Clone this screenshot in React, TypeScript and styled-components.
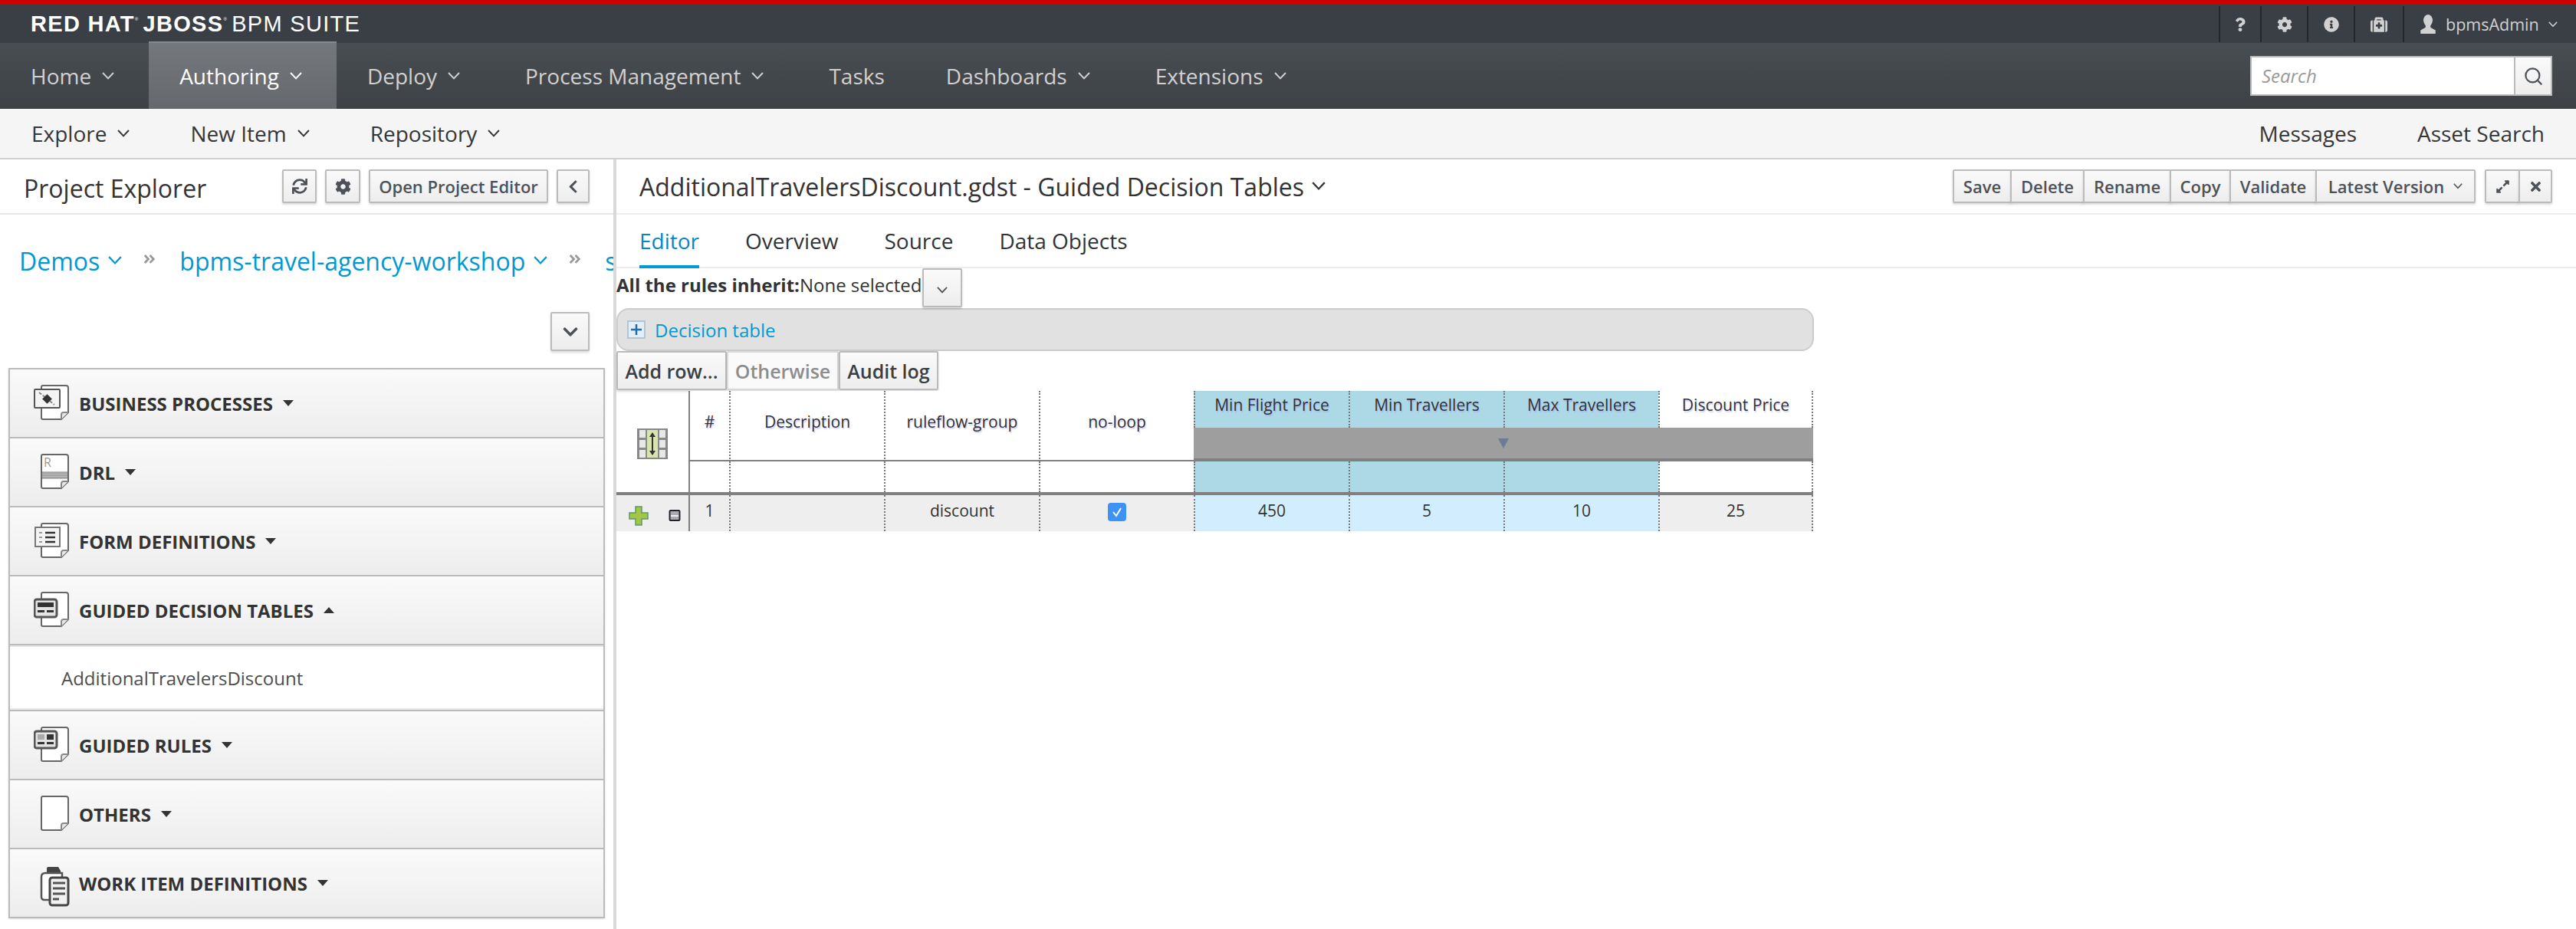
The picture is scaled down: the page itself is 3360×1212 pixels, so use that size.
import React from 'react'
import styled, { createGlobalStyle } from 'styled-components'
import {
  FaAngleDoubleRight,
  FaChevronDown,
  FaChevronLeft,
  FaCog,
  FaExpandAlt,
  FaInfoCircle,
  FaMedkit,
  FaQuestion,
  FaSync,
  FaTimes,
} from 'react-icons/fa'
import { FiSearch } from 'react-icons/fi'

const GlobalStyle = createGlobalStyle`
  html, body {
    margin: 0;
    padding: 0;
    background: #fff;
    overflow: hidden;
  }

  * {
    box-sizing: border-box;
  }

  body {
    font-family: "Open Sans", "Noto Sans", sans-serif;
    color: #333;
  }
`

const Page = styled.div`
  width: 3360px;
  height: 1212px;
  display: flex;
  flex-direction: column;
  overflow: hidden;
`

const TopBar = styled.header`
  height: 56px;
  flex: none;
  display: flex;
  justify-content: space-between;
  border-top: 6px solid #cc0000;
  background: #3a3f46;
  color: #fff;
`

const Logo = styled.div`
  padding: 9px 0 0 40px;
  font-family: "Liberation Sans", Arial, sans-serif;
  font-size: 29px;
  line-height: 32px;
  font-weight: 700;
  letter-spacing: 1.3px;
  white-space: nowrap;

  span {
    font-weight: 400;
  }

  sup {
    font-size: 6px;
    line-height: 0;
    vertical-align: 14px;
    font-weight: 400;
    margin-right: 5px;
  }
`

const Utilities = styled.div`
  display: flex;
  padding-top: 2px;
`

const UtilityItem = styled.div<{ $width: number }>`
  width: ${(p) => p.$width}px;
  height: 47px;
  display: flex;
  align-items: center;
  justify-content: center;
  border-left: 2px solid #23262b;
  color: #d1d1d1;
  font-size: 21.5px;
`

const UserItem = styled(UtilityItem)`
  justify-content: flex-start;
  gap: 12px;
  padding-left: 20px;
`

const MainNav = styled.nav`
  height: 86px;
  flex: none;
  display: flex;
  align-items: stretch;
  justify-content: space-between;
  padding-right: 31px;
  background: linear-gradient(#484d51, #3e4246);
`

const NavList = styled.div`
  display: flex;
`

const NavItem = styled.div<{ $active?: boolean }>`
  display: flex;
  align-items: center;
  gap: 14px;
  padding: 0 45px 0 40px;
  font-size: 28px;
  color: ${(p) => (p.$active ? '#fff' : '#d1d1d1')};
  white-space: nowrap;
  ${(p) =>
    p.$active &&
    `
    margin-top: -2px;
    border-top: 2px solid #85888c;
    background: linear-gradient(#74777b, #65686c);
  `}
`

const PlainNavItem = styled(NavItem)`
  padding-right: 40px;
`

const SearchBox = styled.div`
  align-self: center;
  width: 394px;
  height: 52px;
  display: flex;
  border: 2px solid #bbb;
  background: #fff;
`

const SearchText = styled.div`
  flex: 1;
  padding-left: 13px;
  font-size: 24px;
  line-height: 48px;
  font-style: italic;
  color: #999;
`

const SearchButton = styled.div`
  width: 48px;
  display: flex;
  align-items: center;
  justify-content: center;
  border-left: 2px solid #bbb;
  background: linear-gradient(#fafafa, #ededed);
  color: #4d5258;
  font-size: 27px;
`

const SubNav = styled.nav`
  height: 66px;
  flex: none;
  display: flex;
  justify-content: space-between;
  align-items: center;
  padding: 0 41px;
  border-bottom: 2px solid #cfcfcf;
  background: #f5f5f5;
  color: #363636;
  font-size: 28px;
`

const SubNavGroup = styled.div`
  display: flex;
  gap: 79px;
`

const SubNavItem = styled.div`
  display: flex;
  align-items: center;
  gap: 14px;
  white-space: nowrap;
`

const Workspace = styled.div`
  flex: 1;
  display: flex;
  min-height: 0;
`

const ExplorerPanel = styled.aside`
  width: 804px;
  flex: none;
  border-right: 4px solid #d8d8d8;
  overflow: hidden;
`

const ExplorerHeader = styled.div`
  height: 72px;
  display: flex;
  align-items: center;
  justify-content: space-between;
  padding: 0 31px;
  border-bottom: 2px solid #e5e5e5;
`

const PanelTitle = styled.div`
  padding-top: 4px;
  font-size: 32px;
  color: #333;
  white-space: nowrap;
`

const ButtonRow = styled.div<{ $gap?: number }>`
  display: flex;
  gap: ${(p) => p.$gap ?? 0}px;
`

const ToolButton = styled.div<{ $width?: number }>`
  height: 44px;
  ${(p) => p.$width && `width: ${p.$width}px;`}
  display: flex;
  align-items: center;
  justify-content: center;
  gap: 12px;
  border: 2px solid #bbb;
  border-radius: 2px;
  background: linear-gradient(#fafafa, #ededed);
  box-shadow: 0 2px 3px rgba(3, 3, 3, 0.15);
  color: #4d5258;
  font-size: 22px;
  font-weight: 600;
  white-space: nowrap;
`

const GroupButton = styled(ToolButton)`
  & + & {
    margin-left: -2px;
  }
`

const Breadcrumbs = styled.div`
  height: 120px;
  display: flex;
  align-items: center;
  padding-left: 25px;
  color: #0099d3;
  font-size: 32px;
  white-space: nowrap;
`

const Crumb = styled.div`
  display: flex;
  align-items: center;
  gap: 11px;
`

const CrumbSeparator = styled.div`
  display: flex;
  margin: 0 30px 4px 27px;
  color: #999;
  font-size: 18px;
`

const ExpandRow = styled.div`
  display: flex;
  justify-content: flex-end;
  padding: 7px 31px 0 0;
`

const ExpandButton = styled(ToolButton)`
  width: 51px;
  height: 51px;
  color: #4d5258;
`

const Accordion = styled.div`
  margin: 22px 11px 0;
  border: 2px solid #bbb;
  box-shadow: 0 1px 2px rgba(3, 3, 3, 0.15);
`

const AccordionHeader = styled.div`
  height: 90px;
  display: flex;
  align-items: center;
  padding-left: 31px;
  border-bottom: 2px solid #bbb;
  background: linear-gradient(#fafafa, #ededed);

  &:last-child {
    height: 88px;
    border-bottom: 0;
  }
`

const AccordionLabel = styled.div`
  margin-left: 13px;
  font-size: 24px;
  font-weight: 700;
  color: #333;
  white-space: nowrap;
`

const Caret = styled.div<{ $up?: boolean }>`
  margin-left: 13px;
  width: 0;
  height: 0;
  border-left: 7px solid transparent;
  border-right: 7px solid transparent;
  ${(p) => (p.$up ? 'border-bottom' : 'border-top')}: 8px solid #333;
`

const AccordionBody = styled.div`
  height: 86px;
  display: flex;
  align-items: center;
  padding: 0 0 2px 67px;
  border-top: 2px solid #e5e5e5;
  border-bottom: 2px solid #bbb;
  box-shadow: inset 0 -2px 0 #e8e8e8;
  font-size: 24px;
  color: #4d4d4d;
`

const EditorPanel = styled.main`
  flex: 1;
  min-width: 0;
`

const EditorHeader = styled.div`
  height: 72px;
  display: flex;
  align-items: center;
  justify-content: space-between;
  padding: 0 31px 0 30px;
  border-bottom: 2px solid #ededed;
`

const EditorTitle = styled(PanelTitle)`
  display: flex;
  align-items: center;
  gap: 10px;
  padding-top: 0;
`

const Tabs = styled.div`
  height: 70px;
  display: flex;
  gap: 60px;
  padding-left: 30px;
  border-bottom: 2px solid #ededed;
`

const Tab = styled.div<{ $active?: boolean }>`
  height: 70px;
  padding-top: 15px;
  font-size: 28px;
  color: ${(p) => (p.$active ? '#0088ce' : '#333')};
  border-bottom: 4px solid ${(p) => (p.$active ? '#0099d3' : 'transparent')};
  white-space: nowrap;
`

const InheritRow = styled.div`
  height: 52px;
  display: flex;
  align-items: flex-start;
  font-size: 24px;
  line-height: 43px;
  color: #333;

  b {
    font-weight: 700;
  }
`

const InheritButton = styled(ToolButton)`
  width: 52px;
  height: 51px;
  padding-top: 6px;
`

const TablePanel = styled.div`
  height: 56px;
  width: 1562px;
  display: flex;
  align-items: center;
  gap: 12px;
  padding: 0 0 0 12px;
  border: 2px solid #ccc;
  border-radius: 16px;
  background: #e1e1e1;
  color: #0099d3;
  font-size: 24px;
`

const TableActions = styled.div`
  height: 52px;
  display: flex;
`

const ActionButton = styled.div<{ $disabled?: boolean; $width: number }>`
  width: ${(p) => p.$width}px;
  height: 51px;
  display: flex;
  align-items: center;
  justify-content: center;
  border: 2px solid ${(p) => (p.$disabled ? '#d8d8d8' : '#bbb')};
  border-radius: 2px;
  background: ${(p) => (p.$disabled ? '#fafafa' : 'linear-gradient(#fafafa, #ededed)')};
  box-shadow: 0 2px 3px rgba(3, 3, 3, 0.15);
  color: ${(p) => (p.$disabled ? '#8b8d8f' : '#393f44')};
  font-size: 25px;
  font-weight: 600;
  white-space: nowrap;
`

const Grid = styled.div`
  display: grid;
  grid-template-columns: 96px 51px repeat(7, 202px);
  grid-template-rows: 48px 44px 40px 4px 47px;
  font-size: 21px;
  color: #333;
`

const Corner = styled.div`
  grid-column: 1;
  grid-row: 1 / 4;
  display: flex;
  align-items: center;
  justify-content: center;
  padding: 6px 0 0 0;
  border-right: 2px solid #808080;
`

const HeadCell = styled.div<{ $blue?: boolean; $tall?: boolean; $first?: boolean; $last?: boolean }>`
  ${(p) => (p.$tall ? 'grid-row: 1 / 3; border-bottom: 2px solid #808080; padding-top: 25px;' : 'padding-top: 3px;')}
  text-align: center;
  line-height: 30px;
  white-space: nowrap;
  background: ${(p) => (p.$blue ? '#add8e6' : '#fff')};
  border-left: ${(p) => (p.$first ? '0' : '2px dotted #777')};
  ${(p) => p.$last && 'border-right: 2px dotted #777;'}
  text-shadow: 1px 2px 1px rgba(150, 150, 255, 0.45);
`

const GreyBand = styled.div`
  grid-column: 6 / 10;
  grid-row: 2;
  display: flex;
  align-items: center;
  justify-content: center;
  border-bottom: 4px solid #808080;
  background: #9e9e9e;

  &::after {
    content: '';
    border-left: 7px solid transparent;
    border-right: 7px solid transparent;
    border-top: 13px solid #6f7a94;
  }
`

const SpacerCell = styled.div<{ $blue?: boolean; $first?: boolean; $last?: boolean }>`
  background: ${(p) => (p.$blue ? '#add8e6' : '#fff')};
  border-left: ${(p) => (p.$first ? '0' : '2px dotted #777')};
  ${(p) => p.$last && 'border-right: 2px dotted #777;'}
`

const ThickRule = styled.div`
  grid-column: 1 / 10;
  background: #808080;
`

const RowTools = styled.div`
  display: flex;
  align-items: center;
  justify-content: space-between;
  padding: 6px 10px 0 16px;
  border-right: 2px solid #808080;
  background: #eee;
`

const DataCell = styled.div<{ $blue?: boolean; $first?: boolean; $last?: boolean }>`
  display: flex;
  justify-content: center;
  align-items: flex-start;
  padding-top: 5px;
  line-height: 30px;
  background: ${(p) => (p.$blue ? '#d2eefe' : '#eee')};
  border-left: ${(p) => (p.$first ? '0' : '2px dotted #777')};
  ${(p) => p.$last && 'border-right: 2px dotted #777;'}
`

const CheckMark = styled.div`
  width: 24px;
  height: 24px;
  margin-top: 5px;
  display: flex;
  align-items: center;
  justify-content: center;
  border-radius: 4px;
  background: #3d92f5;
`

const Chevron = ({ size = 16 }: { size?: number }) => (
  <svg width={size} height={size * 0.62} viewBox="0 0 16 10" fill="none" stroke="currentColor" strokeWidth="2">
    <polyline points="1,1 8,8.5 15,1" />
  </svg>
)

const UserGlyph = () => (
  <svg width="22" height="26" viewBox="0 0 20 24" fill="#d1d1d1">
    <ellipse cx="10" cy="7" rx="5.5" ry="7" />
    <path d="M7 12v3.5L1 19v4h18v-4l-6-3.5V12z" />
  </svg>
)

const DocIcon = ({ children }: { children?: React.ReactNode }) => (
  <svg width="46" height="48" viewBox="0 0 46 48">
    <path d="M10 3q0-2 2-2h30q3 0 3 3v32l-9 9H12q-2 0-2-2z" fill="#fff" stroke="#666" strokeWidth="2" />
    <path d="M36 45v-6q0-3 3-3h6" fill="#e8e8e8" stroke="#888" strokeWidth="2" />
    {children}
  </svg>
)

const ProcessIcon = () => (
  <DocIcon>
    <rect x="1" y="6" width="33" height="24" rx="1" fill="#f4f4f4" stroke="#555" strokeWidth="2" />
    <path d="M7 10l20 16" stroke="#888" strokeWidth="2" strokeDasharray="4 2" />
    <rect x="13" y="14" width="9" height="9" fill="#333" transform="rotate(45 17.5 18.5)" />
  </DocIcon>
)

const RuleFileIcon = () => (
  <DocIcon>
    <text x="13" y="17" fontSize="16" fill="#999" fontFamily="Open Sans">R</text>
    <rect x="11" y="23" width="33" height="10" fill="#bbb" />
    <path d="M11 25h33M11 28h33M11 31h33" stroke="#888" strokeWidth="1" />
  </DocIcon>
)

const FormIcon = () => (
  <DocIcon>
    <rect x="2" y="6" width="32" height="25" fill="#f4f4f4" stroke="#777" strokeWidth="2" />
    <path d="M15 13h13M15 19h13M15 25h13" stroke="#333" strokeWidth="2.5" />
    <path d="M7 13h4M7 19h4M7 25h4" stroke="#999" strokeWidth="2" />
  </DocIcon>
)

const DecisionTableIcon = () => (
  <DocIcon>
    <rect x="1" y="10" width="29" height="23" rx="3" fill="#e4e4e4" stroke="#555" strokeWidth="3" />
    <rect x="5" y="14" width="21" height="6" fill="#333" />
    <rect x="5" y="24" width="9" height="3" fill="#333" />
    <rect x="17" y="24" width="9" height="3" fill="#333" />
  </DocIcon>
)

const GuidedRuleIcon = () => (
  <DocIcon>
    <rect x="1" y="6" width="29" height="22" rx="3" fill="#e4e4e4" stroke="#555" strokeWidth="3" />
    <rect x="5" y="10" width="9" height="7" fill="#aaa" />
    <rect x="17" y="10" width="9" height="7" fill="#333" />
    <rect x="5" y="20" width="9" height="3" fill="#333" />
    <rect x="17" y="20" width="9" height="3" fill="#333" />
  </DocIcon>
)

const WorkItemIcon = () => (
  <svg width="46" height="48" viewBox="0 0 46 48" overflow="visible">
    <path d="M17 11V5q0-2 2-2h13l3 5v4z" fill="#444" />
    <path d="M10 16q0-5 5-5h22v35H14q-4 0-4-4z" fill="#fff" stroke="#555" strokeWidth="2.5" />
    <rect x="21" y="17" width="24" height="36" rx="3" fill="#f2f2f2" stroke="#444" strokeWidth="3" />
    <path d="M25 24h16M25 31h16M25 38h16M25 45h8" stroke="#555" strokeWidth="3" />
  </svg>
)

const ExpandPlusIcon = () => (
  <svg width="24" height="24" viewBox="0 0 24 24">
    <rect x="1" y="1" width="22" height="22" fill="#e4eef6" stroke="#b5c4d2" strokeWidth="2" />
    <path d="M12 5v14M5 12h14" stroke="#1f6fa8" strokeWidth="2.5" />
  </svg>
)

const ColumnsIcon = () => (
  <svg width="40" height="40" viewBox="0 0 40 40">
    <rect width="40" height="40" fill="#888" />
    {[2, 15, 28].map((y) => (
      <React.Fragment key={y}>
        <rect x="3" y={y} width="8" height="10" fill="#e8e8e8" />
        <rect x="29" y={y} width="8" height="10" fill="#e8e8e8" />
      </React.Fragment>
    ))}
    <rect x="13" y="2" width="14" height="36" fill="#d8e4b0" />
    <path d="M20 6v28" stroke="#333" strokeWidth="2" />
    <path d="M16 11l4-6 4 6zM16 29l4 6 4-6z" fill="#333" />
  </svg>
)

const AddRowIcon = () => (
  <svg width="26" height="26" viewBox="0 0 26 26">
    <path d="M9 1h8v8h8v8h-8v8H9v-8H1V9h8z" fill="#a5c545" stroke="#5a9a6a" strokeWidth="1.5" />
  </svg>
)

const RemoveRowIcon = () => (
  <svg width="16" height="17" viewBox="0 0 16 17">
    <rect width="16" height="17" fill="#fff" />
    <rect x="1.5" y="2" width="13" height="13" rx="1" fill="#aaa" stroke="#223" strokeWidth="2" />
    <rect x="3" y="8" width="10" height="2" fill="#eee" />
  </svg>
)

const navItems = ['Home', 'Authoring', 'Deploy', 'Process Management', 'Tasks', 'Dashboards', 'Extensions']
const noCaret = ['Tasks']
const fileActions = ['Save', 'Delete', 'Rename', 'Copy', 'Validate']
const fileWidths = [77, 97, 115, 80, 114]
const tabs = ['Editor', 'Overview', 'Source', 'Data Objects']
const plainColumns = ['#', 'Description', 'ruleflow-group', 'no-loop']
const blueColumns = ['Min Flight Price', 'Min Travellers', 'Max Travellers']
const values = ['450', '5', '10']

const App = () => (
  <Page>
    <GlobalStyle />
    <TopBar>
      <Logo>
        RED HAT<sup>®</sup>JBOSS<sup>®</sup><span>BPM SUITE</span>
      </Logo>
      <Utilities>
        <UtilityItem $width={54}><FaQuestion size={18} /></UtilityItem>
        <UtilityItem $width={61}><FaCog size={20} /></UtilityItem>
        <UtilityItem $width={61}><FaInfoCircle size={20} /></UtilityItem>
        <UtilityItem $width={64}><FaMedkit size={22} /></UtilityItem>
        <UserItem $width={226}>
          <UserGlyph />
          bpmsAdmin
          <Chevron size={12} />
        </UserItem>
      </Utilities>
    </TopBar>

    <MainNav>
      <NavList>
        {navItems.map((item) =>
          noCaret.includes(item) ? (
            <PlainNavItem key={item}>{item}</PlainNavItem>
          ) : (
            <NavItem key={item} $active={item === 'Authoring'}>
              {item}
              <Chevron />
            </NavItem>
          ),
        )}
      </NavList>
      <SearchBox>
        <SearchText>Search</SearchText>
        <SearchButton><FiSearch /></SearchButton>
      </SearchBox>
    </MainNav>

    <SubNav>
      <SubNavGroup>
        <SubNavItem>Explore<Chevron /></SubNavItem>
        <SubNavItem>New Item<Chevron /></SubNavItem>
        <SubNavItem>Repository<Chevron /></SubNavItem>
      </SubNavGroup>
      <SubNavGroup>
        <SubNavItem>Messages</SubNavItem>
        <SubNavItem>Asset Search</SubNavItem>
      </SubNavGroup>
    </SubNav>

    <Workspace>
      <ExplorerPanel>
        <ExplorerHeader>
          <PanelTitle>Project Explorer</PanelTitle>
          <ButtonRow $gap={11}>
            <ToolButton $width={45}><FaSync size={20} /></ToolButton>
            <ToolButton $width={46}><FaCog size={21} /></ToolButton>
            <ToolButton $width={234}>Open Project Editor</ToolButton>
            <ToolButton $width={43}><FaChevronLeft size={19} /></ToolButton>
          </ButtonRow>
        </ExplorerHeader>

        <Breadcrumbs>
          <Crumb>Demos<Chevron size={18} /></Crumb>
          <CrumbSeparator><FaAngleDoubleRight /></CrumbSeparator>
          <Crumb>bpms-travel-agency-workshop<Chevron size={18} /></Crumb>
          <CrumbSeparator><FaAngleDoubleRight /></CrumbSeparator>
          <Crumb>s</Crumb>
        </Breadcrumbs>

        <ExpandRow>
          <ExpandButton><FaChevronDown size={22} /></ExpandButton>
        </ExpandRow>

        <Accordion>
          <AccordionHeader><ProcessIcon /><AccordionLabel>BUSINESS PROCESSES</AccordionLabel><Caret /></AccordionHeader>
          <AccordionHeader><RuleFileIcon /><AccordionLabel>DRL</AccordionLabel><Caret /></AccordionHeader>
          <AccordionHeader><FormIcon /><AccordionLabel>FORM DEFINITIONS</AccordionLabel><Caret /></AccordionHeader>
          <AccordionHeader><DecisionTableIcon /><AccordionLabel>GUIDED DECISION TABLES</AccordionLabel><Caret $up /></AccordionHeader>
          <AccordionBody>AdditionalTravelersDiscount</AccordionBody>
          <AccordionHeader><GuidedRuleIcon /><AccordionLabel>GUIDED RULES</AccordionLabel><Caret /></AccordionHeader>
          <AccordionHeader><DocIcon /><AccordionLabel>OTHERS</AccordionLabel><Caret /></AccordionHeader>
          <AccordionHeader><WorkItemIcon /><AccordionLabel>WORK ITEM DEFINITIONS</AccordionLabel><Caret /></AccordionHeader>
        </Accordion>
      </ExplorerPanel>

      <EditorPanel>
        <EditorHeader>
          <EditorTitle>
            AdditionalTravelersDiscount.gdst - Guided Decision Tables
            <Chevron size={18} />
          </EditorTitle>
          <ButtonRow $gap={12}>
            <ButtonRow>
              {fileActions.map((action, i) => (
                <GroupButton key={action} $width={fileWidths[i]}>{action}</GroupButton>
              ))}
              <GroupButton $width={209}>Latest Version<Chevron size={12} /></GroupButton>
            </ButtonRow>
            <ButtonRow>
              <GroupButton $width={46}><FaExpandAlt size={19} /></GroupButton>
              <GroupButton $width={44}><FaTimes size={19} /></GroupButton>
            </ButtonRow>
          </ButtonRow>
        </EditorHeader>

        <Tabs>
          {tabs.map((tab) => (
            <Tab key={tab} $active={tab === 'Editor'}>{tab}</Tab>
          ))}
        </Tabs>

        <InheritRow>
          <b>All the rules inherit:</b>None selected
          <InheritButton><Chevron size={14} /></InheritButton>
        </InheritRow>

        <TablePanel>
          <ExpandPlusIcon />
          Decision table
        </TablePanel>

        <TableActions>
          <ActionButton $width={144}>Add row...</ActionButton>
          <ActionButton $width={146} $disabled>Otherwise</ActionButton>
          <ActionButton $width={130}>Audit log</ActionButton>
        </TableActions>

        <Grid>
          <Corner><ColumnsIcon /></Corner>
          {plainColumns.map((col, i) => (
            <HeadCell key={col} $tall $first={i === 0}>{col}</HeadCell>
          ))}
          {blueColumns.map((col) => (
            <HeadCell key={col} $blue>{col}</HeadCell>
          ))}
          <HeadCell $last>Discount Price</HeadCell>
          <GreyBand />

          <SpacerCell $first />
          <SpacerCell />
          <SpacerCell />
          <SpacerCell />
          <SpacerCell $blue />
          <SpacerCell $blue />
          <SpacerCell $blue />
          <SpacerCell $last />

          <ThickRule />

          <RowTools>
            <AddRowIcon />
            <RemoveRowIcon />
          </RowTools>
          <DataCell $first>1</DataCell>
          <DataCell />
          <DataCell>discount</DataCell>
          <DataCell>
            <CheckMark>
              <svg width="16" height="16" viewBox="0 0 16 16" fill="none" stroke="#fff" strokeWidth="2">
                <polyline points="3,8 7,13 13,3" />
              </svg>
            </CheckMark>
          </DataCell>
          {values.map((v) => (
            <DataCell key={v} $blue>{v}</DataCell>
          ))}
          <DataCell $last>25</DataCell>
        </Grid>
      </EditorPanel>
    </Workspace>
  </Page>
)

export default App
